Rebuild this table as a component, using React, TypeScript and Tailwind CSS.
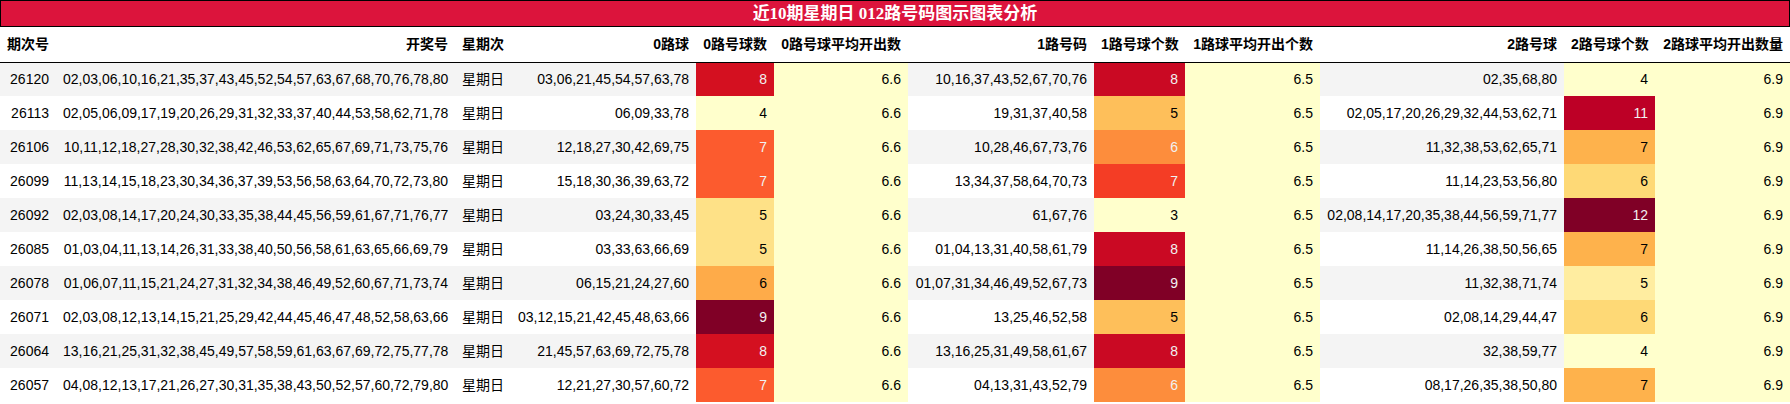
const rows = [
  { id: '26120', nums: '02,03,06,10,16,21,35,37,43,45,52,54,57,63,67,68,70,76,78,80', r0: '03,06,21,45,54,57,63,78', c0: 8, r1: '10,16,37,43,52,67,70,76', c1: 8, r2: '02,35,68,80', c2: 4 },
  { id: '26113', nums: '02,05,06,09,17,19,20,26,29,31,32,33,37,40,44,53,58,62,71,78', r0: '06,09,33,78', c0: 4, r1: '19,31,37,40,58', c1: 5, r2: '02,05,17,20,26,29,32,44,53,62,71', c2: 11 },
  { id: '26106', nums: '10,11,12,18,27,28,30,32,38,42,46,53,62,65,67,69,71,73,75,76', r0: '12,18,27,30,42,69,75', c0: 7, r1: '10,28,46,67,73,76', c1: 6, r2: '11,32,38,53,62,65,71', c2: 7 },
  { id: '26099', nums: '11,13,14,15,18,23,30,34,36,37,39,53,56,58,63,64,70,72,73,80', r0: '15,18,30,36,39,63,72', c0: 7, r1: '13,34,37,58,64,70,73', c1: 7, r2: '11,14,23,53,56,80', c2: 6 },
  { id: '26092', nums: '02,03,08,14,17,20,24,30,33,35,38,44,45,56,59,61,67,71,76,77', r0: '03,24,30,33,45', c0: 5, r1: '61,67,76', c1: 3, r2: '02,08,14,17,20,35,38,44,56,59,71,77', c2: 12 },
  { id: '26085', nums: '01,03,04,11,13,14,26,31,33,38,40,50,56,58,61,63,65,66,69,79', r0: '03,33,63,66,69', c0: 5, r1: '01,04,13,31,40,58,61,79', c1: 8, r2: '11,14,26,38,50,56,65', c2: 7 },
  { id: '26078', nums: '01,06,07,11,15,21,24,27,31,32,34,38,46,49,52,60,67,71,73,74', r0: '06,15,21,24,27,60', c0: 6, r1: '01,07,31,34,46,49,52,67,73', c1: 9, r2: '11,32,38,71,74', c2: 5 },
  { id: '26071', nums: '02,03,08,12,13,14,15,21,25,29,42,44,45,46,47,48,52,58,63,66', r0: '03,12,15,21,42,45,48,63,66', c0: 9, r1: '13,25,46,52,58', c1: 5, r2: '02,08,14,29,44,47', c2: 6 },
  { id: '26064', nums: '13,16,21,25,31,32,38,45,49,57,58,59,61,63,67,69,72,75,77,78', r0: '21,45,57,63,69,72,75,78', c0: 8, r1: '13,16,25,31,49,58,61,67', c1: 8, r2: '32,38,59,77', c2: 4 },
  { id: '26057', nums: '04,08,12,13,17,21,26,27,30,31,35,38,43,50,52,57,60,72,79,80', r0: '12,21,27,30,57,60,72', c0: 7, r1: '04,13,31,43,52,79', c1: 6, r2: '08,17,26,35,38,50,80', c2: 7 },
];

// YlOrRd gradient, per column
const c0Map: Record<number, string> = {
  4: 'bg-[#ffffcc] text-black',
  5: 'bg-[#fee187] text-black',
  6: 'bg-[#feab49] text-black',
  7: 'bg-[#fc5b2e] text-[#f1f1f1]',
  8: 'bg-[#d41020] text-[#f1f1f1]',
  9: 'bg-[#800026] text-[#f1f1f1]',
};
const c1Map: Record<number, string> = {
  3: 'bg-[#ffffcc] text-black',
  5: 'bg-[#febf5a] text-black',
  6: 'bg-[#fd8d3c] text-[#f1f1f1]',
  7: 'bg-[#f43d25] text-[#f1f1f1]',
  8: 'bg-[#ca0923] text-[#f1f1f1]',
  9: 'bg-[#800026] text-[#f1f1f1]',
};
const c2Map: Record<number, string> = {
  4: 'bg-[#ffffcc] text-black',
  5: 'bg-[#ffeda0] text-black',
  6: 'bg-[#fed976] text-black',
  7: 'bg-[#feb24c] text-black',
  11: 'bg-[#bd0026] text-[#f1f1f1]',
  12: 'bg-[#800026] text-[#f1f1f1]',
};

const headers = [
  '期次号', '开奖号', '星期次', '0路球', '0路号球数', '0路号球平均开出数',
  '1路号码', '1路号球个数', '1路球平均开出个数', '2路号球', '2路号球个数', '2路球平均开出数量',
];

const widths = [
  'w-[56px]', 'w-[399px]', 'w-[56px]', 'w-[185px]', 'w-[78px]', 'w-[134px]',
  'w-[186px]', 'w-[91px]', 'w-[135px]', 'w-[244px]', 'w-[91px]', 'w-[135px]',
];

const cell = 'px-[7px] text-right align-middle whitespace-nowrap';

export default function App() {
  return (
    <div className="w-[1790px] bg-white text-black font-['Liberation_Sans','Noto_Sans_CJK_SC',sans-serif] text-[14px]">
      <div className="h-[27px] border border-black bg-[#dc143c] text-center text-white font-bold text-[17px] leading-[25px] font-['Liberation_Serif','Noto_Sans_CJK_SC',serif]">
        近10期星期日 012路号码图示图表分析
      </div>
      <table className="w-[1790px] table-fixed border-collapse">
        <colgroup>
          {widths.map((w, i) => (
            <col key={i} className={w} />
          ))}
        </colgroup>
        <thead>
          <tr className="h-[35px] border-b border-black">
            {headers.map((h) => (
              <th key={h} className={`${cell} font-bold leading-5`}>
                {h}
              </th>
            ))}
          </tr>
        </thead>
        <tbody>
          {rows.map((r, i) => (
            <tr key={r.id} className={`h-[34px] leading-5 ${i % 2 === 0 ? 'bg-[#f4f4f4]' : 'bg-white'}`}>
              <td className={cell}>{r.id}</td>
              <td className={cell}>{r.nums}</td>
              <td className={cell}>星期日</td>
              <td className={cell}>{r.r0}</td>
              <td className={`${cell} ${c0Map[r.c0]}`}>{r.c0}</td>
              <td className={`${cell} bg-[#ffffcc]`}>6.6</td>
              <td className={cell}>{r.r1}</td>
              <td className={`${cell} ${c1Map[r.c1]}`}>{r.c1}</td>
              <td className={`${cell} bg-[#ffffcc]`}>6.5</td>
              <td className={cell}>{r.r2}</td>
              <td className={`${cell} ${c2Map[r.c2]}`}>{r.c2}</td>
              <td className={`${cell} bg-[#ffffcc]`}>6.9</td>
            </tr>
          ))}
        </tbody>
      </table>
    </div>
  );
}
